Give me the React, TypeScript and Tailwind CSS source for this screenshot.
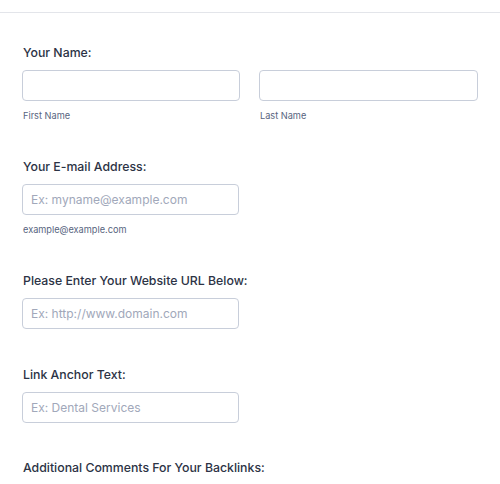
import React from "react";

const font = { fontFamily: "Inter, 'Noto Sans', sans-serif" };

function Label({ children }: { children: React.ReactNode }) {
  return (
    <div className="text-[12.3px] leading-[20px] text-[#2c3345] font-medium pl-[1px]">{children}</div>
  );
}

function Input({ placeholder, w = "w-[218px]" }: { placeholder?: string; w?: string }) {
  return (
    <div
      className={`${w} h-[31px] border border-[#c8ceda] rounded-[4px] bg-white flex items-center px-[8px] text-[12px] text-[#a1a8ba]`}
    >
      {placeholder}
    </div>
  );
}

function Sub({ children }: { children: React.ReactNode }) {
  return <div className="text-[9.2px] leading-[14px] text-[#57647e] pl-[1px]">{children}</div>;
}

export default function App() {
  return (
    <div className="w-[500px] h-[484px] bg-white overflow-hidden" style={font}>
      <div className="h-[13px] border-b border-[#e3e5ea]" />
      <div className="pl-[22px] pt-[30px]">
        <Label>Your Name:</Label>
        <div className="flex gap-[19px] mt-[7px]">
          <div className="flex flex-col gap-[8px]">
            <Input />
            <Sub>First Name</Sub>
          </div>
          <div className="flex flex-col gap-[8px]">
            <Input w="w-[219px]" />
            <Sub>Last Name</Sub>
          </div>
        </div>

        <div className="mt-[34px]">
          <Label>Your E-mail Address:</Label>
          <div className="flex flex-col gap-[8px] mt-[7px]">
            <Input placeholder="Ex: myname@example.com" w="w-[217px]" />
            <Sub>example@example.com</Sub>
          </div>
        </div>

        <div className="mt-[34px]">
          <Label>Please Enter Your Website URL Below:</Label>
          <div className="mt-[7px]">
            <Input placeholder="Ex: http://www.domain.com" w="w-[217px]" />
          </div>
        </div>

        <div className="mt-[36px]">
          <Label>Link Anchor Text:</Label>
          <div className="mt-[7px]">
            <Input placeholder="Ex: Dental Services" w="w-[217px]" />
          </div>
        </div>

        <div className="mt-[35px]">
          <Label>Additional Comments For Your Backlinks:</Label>
        </div>
      </div>
    </div>
  );
}
